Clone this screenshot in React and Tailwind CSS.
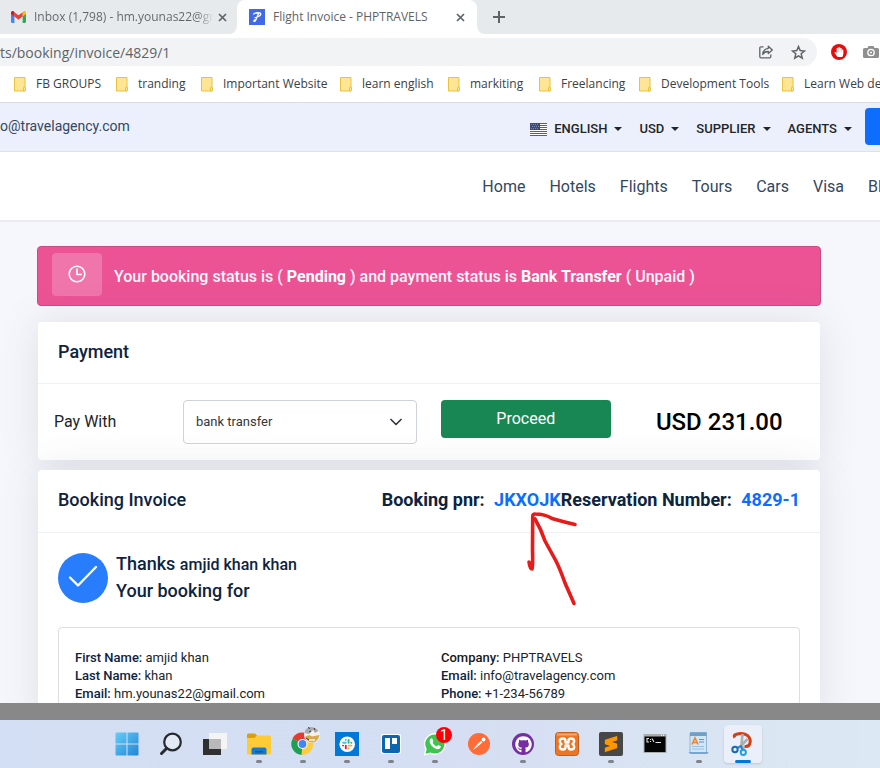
import React from "react";
import { FaGithub, FaHandPaper } from "react-icons/fa";
import { SiSublimetext } from "react-icons/si";

const bookmarks = ["FB GROUPS", "tranding", "Important Website", "learn english", "markiting", "Freelancing", "Development Tools", "Learn Web dev"];

function CloseIcon() {
  return (
    <svg width="9" height="9" viewBox="0 0 9 9" stroke="#5f6368" strokeWidth="1.7" aria-hidden="true">
      <path d="M1 1l7 7M8 1L1 8" />
    </svg>
  );
}

function TabStrip() {
  return (
    <div className="flex h-[34px] shrink-0 overflow-hidden bg-white text-[12px] text-[#5f6368]">
      <div className="flex w-[237px] shrink-0 items-center rounded-br-lg bg-[#e7eaed] pl-[11px] pr-[10px]">
        <svg width="15" height="12" viewBox="0 0 15 12" className="shrink-0" aria-hidden="true">
          <path d="M0 2v8.8c0 .7.4 1.2 1.1 1.2h2.3V5.2L0 2z" fill="#4285f4" />
          <path d="M15 2v8.8c0 .7-.4 1.2-1.1 1.2h-2.3V5.2L15 2z" fill="#34a853" />
          <path d="M11.6 1.4v4.2L15 3V1.8C15 .2 13.3-.5 12.1.6z" fill="#fbbc04" />
          <path d="M3.4 5.6V1.2l4.1 3.1 4.1-3.1v4.4L7.5 8.8z" fill="#ea4335" />
          <path d="M0 1.8V3l3.4 2.6V1.2L2.9.6C1.7-.4 0 .2 0 1.8z" fill="#c5221f" />
        </svg>
        <span className="ml-2 flex-1 overflow-hidden whitespace-nowrap bg-gradient-to-r from-[#5f6368] from-90% to-transparent bg-clip-text text-transparent">
          Inbox (1,798) - hm.younas22@gmail.com
        </span>
        <button aria-label="Close inbox tab" className="ml-1"><CloseIcon /></button>
      </div>
      <div className="w-[240px] shrink-0 bg-[#e7eaed]">
        <div className="flex h-full items-center rounded-t-lg bg-white pl-3 pr-3">
          <svg width="16" height="16" viewBox="0 0 16 16" aria-hidden="true">
            <rect width="16" height="16" fill="#4169e8" />
            <path d="M4.500 5Q8 3 11.500 4.200 12.500 6 9.500 7.500L6 8.500M9.500 4.500L7 10.500Q6 13 4.800 12.300 4.500 11 7.500 10" fill="none" stroke="#fff" strokeWidth="1.300" strokeLinecap="round" strokeLinejoin="round" />
          </svg>
          <span className="ml-2 flex-1 whitespace-nowrap">Flight Invoice - PHPTRAVELS</span>
          <button aria-label="Close invoice tab"><CloseIcon /></button>
        </div>
      </div>
      <div className="flex flex-1 items-center rounded-bl-lg bg-[#e7eaed] pl-4">
        <button aria-label="New tab">
          <svg width="12" height="12" viewBox="0 0 12 12" stroke="#5f6368" strokeWidth="2" aria-hidden="true">
            <path d="M6 0v12M0 6h12" />
          </svg>
        </button>
      </div>
    </div>
  );
}

function AddressBar() {
  return (
    <div className="flex shrink-0 items-center overflow-hidden bg-white pt-1 text-[#5f6368]">
      <div className="flex h-7 flex-1 items-center rounded-r-full bg-[#f1f3f4] pr-[11px]">
        <input aria-label="Address" defaultValue="ts/booking/invoice/4829/1" className="min-w-0 flex-1 bg-transparent text-[14px] outline-none" />
        <button aria-label="Share">
          <svg width="14" height="14" viewBox="0 0 14 14" fill="none" stroke="#5f6368" strokeWidth="1.300" strokeLinejoin="round" aria-hidden="true">
            <path d="M4.500 1.800H2Q.8 1.800.8 3v8.500Q.8 12.800 2 12.800h8.500q1.300 0 1.300-1.300v-2" />
            <path d="M9.300 1.200l4 3.700-4 3.600V6.500C6.500 6.400 4.800 7.500 3.700 9.500c.3-3.300 2.200-5.800 5.600-6.200z" />
          </svg>
        </button>
        <button aria-label="Bookmark this page" className="ml-[18px]">
          <svg width="15" height="15" viewBox="0 0 15 15" fill="none" stroke="#5f6368" strokeWidth="1.500" aria-hidden="true">
            <path d="M7.500 1.600l1.700 4 4.300.4-3.300 2.800 1 4.300-3.700-2.300-3.700 2.300 1-4.300L1.500 6l4.300-.4z" />
          </svg>
        </button>
      </div>
      <button aria-label="Ad blocker" className="ml-[14px]">
        <span className="flex size-4 items-center justify-center rounded-full bg-[#e60d0d] text-white"><FaHandPaper size={10} /></span>
      </button>
      <button aria-label="Camera" className="ml-4 mr-px shrink-0">
        <svg width="16" height="14" viewBox="0 0 16 14" aria-hidden="true">
          <path d="M1.500 3h3L5.500 1h5l1 2h3Q16 3 16 4.500v7q0 1.500-1.500 1.500h-13Q0 13 0 11.500v-7Q0 3 1.500 3z" fill="#8f8f8f" />
          <circle cx="8" cy="7.500" r="3.200" fill="none" stroke="#fff" strokeWidth="1.300" />
          <circle cx="8" cy="7.500" r="1" fill="#fff" />
        </svg>
      </button>
    </div>
  );
}

function Bookmarks() {
  return (
    <nav aria-label="Bookmarks" className="grid h-[37px] shrink-0 grid-cols-[102px_85px_139px_108px_91px_100px_143px_98px] items-center overflow-hidden border-b border-[#d9dbde] bg-white pl-[14px] text-[12px] text-[#3c4043]">
      {bookmarks.map((name) => (
        <a key={name} href="#" className="flex items-center gap-[10px] whitespace-nowrap">
          <svg width="12" height="15" viewBox="0 0 12 15" className="shrink-0" fill="#ffe594" stroke="#e8c33f" aria-hidden="true">
            <path d="M.5.500h10.500v13.500H.500z" />
            <path d="M9.500 14v-3q0-1 1-1t1 1v2q0 1-1 1z" />
          </svg>
          {name}
        </a>
      ))}
    </nav>
  );
}

function Flag() {
  return (
    <svg width="17" height="13" viewBox="0 0 17 13" shapeRendering="crispEdges" aria-hidden="true">
      <path fill="#ffffff" d="M0 0h17v13H0z" />
      <path fill="#d02f3f" d="M0 0h17v1H0zM0 2h17v1H0zM0 4h17v1H0zM0 6h17v1H0zM0 8h17v1H0zM0 10h17v1H0zM0 12h17v1H0z" />
      <path fill="#3c4a78" d="M0 0h10v7H0z" />
      <path stroke="#7f88ab" strokeDasharray="1 1" d="M1 1.500h8M2 3.500h7M1 5.500h8" />
    </svg>
  );
}

function Menu({ label, flag }) {
  return (
    <button className="flex items-center text-[13px] font-medium">
      {flag && <span className="mr-[7px]"><Flag /></span>}
      {label}
      <span className="ml-[7px] border-x-4 border-t-4 border-x-transparent border-t-[#212529]" />
    </button>
  );
}

function SiteHeader() {
  return (
    <header className="shrink-0 text-[#0d233e]">
      <div className="flex h-[49px] items-center justify-between border-b border-[#dee1ea] bg-[#ecf0fc]">
        <a href="#" className="mb-0.5 text-[14px] text-[#33475f]">o@travelagency.com</a>
        <div className="mb-0.5 flex items-center text-[#212529]">
          <div className="flex items-center gap-[17px] pr-[13px] pt-1.5">
            <Menu label="ENGLISH" flag />
            <Menu label="USD" />
            <Menu label="SUPPLIER" />
            <Menu label="AGENTS" />
          </div>
          <button aria-label="Sign up" className="h-[37px] w-[15px] rounded-l bg-[#0d6efd]" />
        </div>
      </div>
      <nav aria-label="Main" className="flex h-[70px] items-center justify-end gap-6 border-b-2 border-[#ececee] bg-white pt-0.5 text-[16px] text-[#33475f]">
        <a href="#">Home</a>
        <a href="#">Hotels</a>
        <a href="#">Flights</a>
        <a href="#">Tours</a>
        <a href="#">Cars</a>
        <a href="#">Visa</a>
        <a href="#" className="w-3 whitespace-nowrap">Bl</a>
      </nav>
    </header>
  );
}

function Alert() {
  return (
    <div role="status" className="-mx-px flex h-[60px] items-center rounded border border-[#cb4a82] bg-[#eb5395] pl-[14px] text-[16px] font-medium text-[#fff5fa]">
      <span className="mb-1 flex h-[43px] w-[50px] shrink-0 items-center justify-center rounded bg-white/20">
        <svg width="18" height="18" viewBox="0 0 18 18" fill="none" stroke="#fff" strokeWidth="1.600" aria-hidden="true">
          <circle cx="9" cy="9" r="7.800" />
          <path d="M9 3.500V9.500h4.800" />
        </svg>
      </span>
      <p className="ml-3 mt-0.5">
        Your booking status is ( <b className="font-bold text-white">Pending</b> ) and payment status is <b className="font-bold text-white">Bank Transfer</b> ( Unpaid )
      </p>
    </div>
  );
}

function Payment() {
  return (
    <section className="mt-4 rounded bg-white shadow-[0_0_40px_rgba(82,85,90,0.14)]">
      <h2 className="flex h-[62px] items-center border-b border-[#f0f1f3] px-5 pb-0.5 text-[18px] font-medium text-[#0d233e]">Payment</h2>
      <div className="grid grid-cols-12 px-1 pb-4 pt-4">
        <label htmlFor="gateway" className="col-span-2 flex items-center px-3 text-[16px] text-[#212529]">Pay With</label>
        <div className="relative col-span-4 px-3">
          <select id="gateway" className="h-11 w-full appearance-none rounded border border-[#ced4da] bg-white px-3 text-[13px] text-[#33373b]">
            <option>bank transfer</option>
          </select>
          <svg width="12" height="8" viewBox="0 0 12 8" className="pointer-events-none absolute right-[27px] top-[18px]" fill="none" stroke="#343a40" strokeWidth="1.700" strokeLinecap="round" strokeLinejoin="round" aria-hidden="true">
            <path d="M1 1.500l5 5 5-5" />
          </svg>
        </div>
        <div className="col-span-3 px-3">
          <button className="h-[38px] w-full rounded bg-[#198754] text-[16px] text-white">Proceed</button>
        </div>
        <strong className="col-span-3 flex items-center justify-center text-[24px] font-medium text-black">USD 231.00</strong>
      </div>
    </section>
  );
}

function Arrow() {
  return (
    <svg width="70" height="110" viewBox="520 505 70 110" className="pointer-events-none absolute right-[230px] top-[35px]" fill="none" stroke="#e81b1b" strokeWidth="3.600" strokeLinecap="round" strokeLinejoin="round" aria-hidden="true">
      <path d="M574 603.500L565 583Q560 569 556 561L545 541Q541 529 535 519" />
      <path d="M529 562Q530 569 532 569Q533 565 532.500 550L532.700 518Q532.500 513.500 535 514Q545 514 552 518.500Q564 522 575 524.500" />
    </svg>
  );
}

function Detail({ label, dark, children }) {
  return (
    <li><b className={dark ? "font-medium text-[#15181b]" : "font-medium text-[#0d233e]"}>{label}:</b> {children}</li>
  );
}

function Invoice() {
  return (
    <section className="relative mt-[10px] rounded bg-white shadow-[0_0_40px_rgba(82,85,90,0.14)]">
      <div className="flex h-[63px] items-center justify-between border-b border-[#f0f1f3] px-5 pb-1 text-[18px] text-[#0d233e]">
        <h2 className="font-medium">Booking Invoice</h2>
        <p className="font-bold">
          Booking pnr: <span className="ml-[5px] text-[#0d6efd]">JKXOJK</span>Reservation Number: <span className="ml-[5px] text-[#0d6efd]">4829-1</span>
        </p>
      </div>
      <div className="px-5 pt-[18px]">
        <div className="flex items-center gap-2">
          <svg width="50" height="50" viewBox="0 0 50 50" className="shrink-0" aria-hidden="true">
            <circle cx="25" cy="25" r="25" fill="#287dfd" />
            <path d="M12 24.500l8 8L38 14" fill="none" stroke="#fff" strokeWidth="2.400" strokeLinecap="round" strokeLinejoin="round" />
          </svg>
          <h3 className="text-[18px] font-medium leading-[26px] text-[#0d233e]">
            Thanks <span className="text-[16px]">amjid khan khan</span><br />Your booking for
          </h3>
        </div>
        <div className="mt-[23px] grid grid-cols-2 gap-6 rounded border border-[#dcdee0] px-4 pt-[21px] text-[13px] leading-[18px] text-[#212529]">
          <ul>
            <Detail label="First Name">amjid khan</Detail>
            <Detail label="Last Name">khan</Detail>
            <Detail label="Email">hm.younas22@gmail.com</Detail>
          </ul>
          <ul className="pb-5">
            <Detail label="Company" dark>PHPTRAVELS</Detail>
            <Detail label="Email">info@travelagency.com</Detail>
            <Detail label="Phone">+1-234-56789</Detail>
          </ul>
        </div>
      </div>
      <Arrow />
    </section>
  );
}

function SlackMark() {
  return (
    <g strokeWidth="1.900" strokeLinecap="round">
      <path stroke="#36c5f0" d="M10.800 7.800v.1M8.200 10.800h2.600" />
      <path stroke="#2eb67d" d="M13.600 8v2.800M16.300 10.800h.1" />
      <path stroke="#e01e5a" d="M8 13.600h.1M10.800 13.600v2.800" />
      <path stroke="#ecb22e" d="M13.600 16.400v.1M13.600 13.600h2.800" />
    </g>
  );
}

const svgProps = { width: 24, height: 24, viewBox: "0 0 24 24", "aria-hidden": true };

const apps = [
  {
    name: "Start",
    icon: (
      <svg {...svgProps}>
        <defs>
          <linearGradient id="win" x1="0" y1="0" x2="1" y2="1" gradientUnits="objectBoundingBox"><stop stopColor="#65ccf8" /><stop offset="1" stopColor="#2286d5" /></linearGradient>
        </defs>
        <path fill="url(#win)" d="M.5 1.500Q.5.500 1.500.500h10v11H.500zM12.500.500h10q1 0 1 1v10h-11zM.5 12.500h11v11h-10q-1 0-1-1zM12.500 12.500h11v10q0 1-1 1h-10z" />
      </svg>
    ),
  },
  {
    name: "Search",
    icon: (
      <svg {...svgProps} fill="none" stroke="#26292d" strokeLinecap="round">
        <circle cx="13.500" cy="10" r="8.300" strokeWidth="2.200" fill="#e4eaf5" />
        <path d="M7.500 16.500L2.500 21.500" strokeWidth="3" />
      </svg>
    ),
  },
  {
    name: "Task view",
    icon: (
      <svg {...svgProps}>
        <path d="M0 7h18v16H0z" fill="#303030" />
        <path d="M6 1h18v16H6z" fill="#f4f4f4" />
        <path d="M6 7h12v10H6z" fill="#b9b9b9" />
      </svg>
    ),
  },
  {
    name: "File Explorer",
    running: true,
    icon: (
      <svg {...svgProps}>
        <path d="M0 3Q0 1.500 1.500 1.500H8L10.500 4V8H0z" fill="#dc9e0b" />
        <path d="M0 6H7.500L10 3.500H22.500Q24 3.500 24 5V21Q24 22.500 22.500 22.500H1.500Q0 22.500 0 21z" fill="#fecb38" />
        <path d="M4.500 22.500V17.500Q4.500 15.500 6.500 15.500h11Q19.500 15.500 19.500 17.500v5z" fill="#1679cb" />
        <path d="M8 19h8v1.500H8z" fill="#0d5a9f" />
      </svg>
    ),
  },
  {
    name: "Chrome",
    running: true,
    icon: (
      <svg {...svgProps} className="overflow-visible">
        <path d="M11.500 12L1.500 6.500A11 11 0 0 1 21 6.500z" fill="#e33b2e" />
        <path d="M11.500 12V23A11 11 0 0 1 1.800 6.500z" fill="#1e9f54" />
        <path d="M11.500 12L21 6.500A11.200 11.200 0 0 1 10.500 23z" fill="#fccd3f" />
        <circle cx="11.500" cy="12" r="5" fill="#fff" />
        <circle cx="11.500" cy="12" r="3.900" fill="#4285f4" />
        <circle cx="21" cy="3" r="8" fill="#f3f1ec" />
        <path d="M13.500 1Q14-4.500 20-5Q25-5 27.500-1L24 1 22-2 18 2z" fill="#a9adb3" />
        <path d="M14 5Q18 2 21 4.500L28.500 3Q27 9.500 22 10.500 16.500 10.500 14 5z" fill="#d5a94c" />
        <path d="M17-4.500l2 1M23-4l1 2M18 0l2-1M15 6l3 2" stroke="#3b3833" />
        <path d="M18 7h6v2h-6z" fill="#f4e3bf" />
      </svg>
    ),
  },
  {
    name: "Slack",
    running: true,
    icon: (
      <svg {...svgProps}>
        <path d="M0 0h24v24H0z" fill="#0078d7" />
        <circle cx="12.200" cy="12.200" r="7.800" fill="#fff" />
        <SlackMark />
      </svg>
    ),
  },
  {
    name: "Trello",
    running: true,
    icon: (
      <svg {...svgProps}>
        <rect x="2" y="2" width="20" height="20" rx="2" fill="#fff" />
        <rect x="3" y="3" width="18" height="18" rx="2" fill="#0c66ad" />
        <path d="M6 6h5v11H6zM13 6h5v6h-5z" fill="#fff" />
      </svg>
    ),
  },
  {
    name: "WhatsApp",
    running: true,
    badge: "1",
    icon: (
      <svg {...svgProps}>
        <path d="M12 1A11 11 0 0 0 2.300 17L.7 23.500 7.300 22A11 11 0 1 0 12 1z" fill="#fff" />
        <path d="M12 2.400A9.600 9.600 0 0 0 3.700 17L2.500 21.700 7.400 20.500A9.600 9.600 0 1 0 12 2.400z" fill="#3fc351" />
        <path d="M7.800 6.500Q9 5.900 9.500 7L10.300 9Q10.400 9.500 9.500 10.600 11 13.500 13.600 14.500L15 13.200Q15.300 13 15.700 13.200L17.700 14.300Q18 14.600 17.600 15.600 16.500 17.700 13.800 17.200 8.500 15.500 6.700 10.300 6.200 7.700 7.800 6.500z" fill="#fff" />
      </svg>
    ),
  },
  {
    name: "Postman",
    icon: (
      <svg {...svgProps}>
        <circle cx="12" cy="12" r="11" fill="#ff6c37" />
        <path d="M6 18L9.500 13 14 8.800 15.500 10.300 10.800 14.500z" fill="#fff" />
        <circle cx="16.500" cy="7.500" r="1.900" fill="#fff" />
        <path d="M9.500 13l1.300 1.500" stroke="#ff6c37" strokeWidth=".6" />
      </svg>
    ),
  },
  {
    name: "GitHub Desktop",
    running: true,
    icon: (
      <span className="flex size-[22px] items-center justify-center rounded-full bg-[#762fa3] text-white"><FaGithub size={17} /></span>
    ),
  },
  {
    name: "XAMPP",
    icon: (
      <svg {...svgProps}>
        <rect x=".5" y=".5" width="23" height="23" rx="3" fill="#ee7523" stroke="#c45f1b" />
        <path d="M2 1.500h20v2H2z" fill="#f6a66c" />
        <path d="M8 6.500Q4.800 6.500 4.800 9.200 4.800 11 6.500 12 4.800 13 4.800 14.800 4.800 17.500 8 17.500 10.500 17.500 10.500 15V13.500H13.500V15Q13.500 17.500 16 17.500 19.200 17.500 19.200 14.800 19.200 13 17.500 12 19.200 11 19.200 9.200 19.200 6.500 16 6.500 13.500 6.500 13.500 9V10.500H10.500V9Q10.500 6.500 8 6.500z" fill="none" stroke="#fff" strokeWidth="2.400" strokeLinejoin="round" />
      </svg>
    ),
  },
  {
    name: "Sublime Text",
    running: true,
    icon: (
      <span className="flex size-6 items-center justify-center rounded-[2px] bg-[#474747] text-[#ff9800]"><SiSublimetext size={16} /></span>
    ),
  },
  {
    name: "Command Prompt",
    icon: (
      <svg {...svgProps}>
        <path d="M.5 2h23v19H.500z" fill="#a9adb2" />
        <path d="M1.500 4.500h21V20h-21z" fill="#050505" />
        <path d="M18 3.200h1M20 3.200h1" stroke="#fff" />
        <path d="M6 6.500H4v3.500h2M7.500 7v1M7.500 9v1M9 6.500l2 3.500M12.500 10.500H18" stroke="#e5e5e5" strokeWidth="1.100" fill="none" />
      </svg>
    ),
  },
  {
    name: "WordPad",
    running: true,
    icon: (
      <svg {...svgProps}>
        <path d="M3 1.500Q3 .5 4 .500h15.500v20H3z" fill="#cfe6f7" stroke="#8fb6d6" />
        <path d="M3 .5h16.500v3.500H3z" fill="#719fc6" />
        <path d="M5 12.500L8 6l3 6.500M6 10.500h4" fill="none" stroke="#ee8534" strokeWidth="1.700" />
        <path d="M12 7.500h5M12 10h5" stroke="#6b8dc8" strokeWidth="1.200" />
        <path d="M5 14.500h12M5 17h12" stroke="#9fc0dc" />
        <path d="M1.500 20h20q0 2-2 2h-15q-2.500 0-3-2z" fill="#73a8d3" />
      </svg>
    ),
  },
  {
    name: "Snipping Tool",
    active: true,
    icon: (
      <svg {...svgProps} fill="none">
        <path d="M4 5.500Q2 3 5.500 2.200 10 1 14 2.200 19.500 4.500 19.200 10 18.500 15 13.500 14.500" stroke="#d53f14" strokeWidth="3" />
        <path d="M11.500 2L10.500 13 12.500 17M16.500 7L8 16" stroke="#aaafb5" strokeWidth="2.600" />
        <circle cx="4" cy="17.500" r="2.700" stroke="#1769bd" strokeWidth="2" />
        <circle cx="12.300" cy="20.300" r="2.600" stroke="#1ca1e5" strokeWidth="2" />
        <path d="M6.500 15.800L10 14l1.300 3.500" stroke="#1b84d2" strokeWidth="1.800" />
      </svg>
    ),
  },
];

function Taskbar() {
  return (
    <nav aria-label="Taskbar" className="flex h-12 shrink-0 items-center justify-center bg-gradient-to-r from-[#d3dff4] via-[#d5def2] to-[#dce9f3] pr-[10px]">
      {apps.map((app) => (
        <button key={app.name} aria-label={app.name} className="relative flex h-12 w-11 shrink-0 items-center justify-center">
          <span className={app.active ? "flex size-[38px] items-center justify-center rounded bg-[#ebeff9] shadow-sm" : "flex size-[38px] items-center justify-center"}>
            {app.icon}
          </span>
          {app.running && <span className="absolute bottom-[5px] left-[19px] h-[3px] w-[6px] rounded-full bg-[#7e838c]" />}
          {app.active && <span className="absolute bottom-[5px] left-[14px] h-[3px] w-4 rounded-full bg-[#0078d4]" />}
          {app.badge && <span className="absolute left-[23px] top-[7px] flex size-4 items-center justify-center rounded-full bg-[#fb0007] text-[14px] text-white">{app.badge}</span>}
        </button>
      ))}
    </nav>
  );
}

export default function App() {
  return (
    <div className="flex h-screen flex-col overflow-hidden bg-[#f5f7fc] font-['Roboto',sans-serif]">
      <div className="shrink-0 font-['Open_Sans',sans-serif]">
        <TabStrip />
        <AddressBar />
        <Bookmarks />
      </div>
      <SiteHeader />
      <main className="min-h-0 flex-1 overflow-hidden pl-[38px] pr-[60px] pt-6">
        <Alert />
        <Payment />
        <Invoice />
      </main>
      <div className="h-[17px] shrink-0 bg-[#888888]" />
      <Taskbar />
    </div>
  );
}
